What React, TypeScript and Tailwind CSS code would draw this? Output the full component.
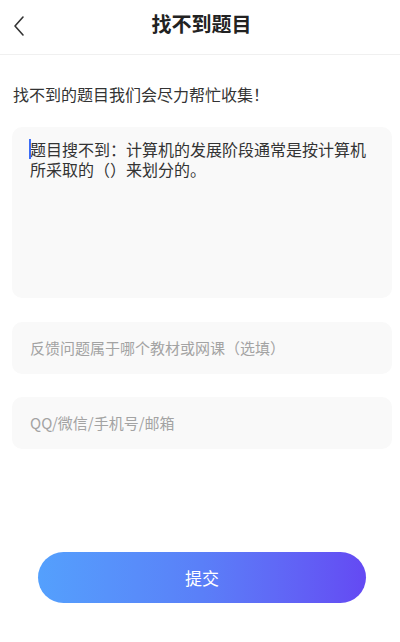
import React from "react";

export default function App() {
  const font = { fontFamily: '"Noto Sans CJK SC", "Noto Sans", sans-serif' };
  return (
    <div className="w-[400px] h-[642px] bg-white flex flex-col text-[#333]" style={font}>
      <div className="h-[55px] relative flex items-center justify-center border-b border-[#f0f0f0]">
        <svg className="absolute left-[11px] top-[15px]" width="16" height="22" viewBox="0 0 16 22" fill="none">
          <path d="M12 2 L4 11 L12 20" stroke="#333" strokeWidth="1.6" strokeLinecap="round" strokeLinejoin="round" />
        </svg>
        <span className="text-[20px] font-bold text-[#222] leading-none mt-[-6px] ml-[3px]">找不到题目</span>
      </div>
      <div className="pl-[12px] pr-[8px] pt-[28px]">
        <div className="text-[16px] leading-[22px] text-[#333] pl-[1px]">找不到的题目我们会尽力帮忙收集！</div>
        <div className="mt-[22px] h-[171px] rounded-[10px] bg-[#f9f9f9] px-[18px] pt-[12px]">
          <div className="text-[16px] leading-[20px] text-[#333] relative">
            <span className="absolute left-[-1px] top-[0px] w-[2px] h-[20px] bg-[#3b6cf6]" />
            题目搜不到：计算机的发展阶段通常是按计算机所采取的（）来划分的。
          </div>
        </div>
        <div className="mt-[24px] h-[52px] rounded-[10px] bg-[#f9f9f9] px-[18px] flex items-center">
          <span className="text-[15px] text-[#a3a3a3]">反馈问题属于哪个教材或网课（选填）</span>
        </div>
        <div className="mt-[23px] h-[52px] rounded-[10px] bg-[#f9f9f9] px-[18px] flex items-center">
          <span className="text-[15px] text-[#a3a3a3]">QQ/微信/手机号/邮箱</span>
        </div>
      </div>
      <div className="flex pl-[38px] mt-[103px]">
        <div className="w-[328px] h-[51px] rounded-full bg-gradient-to-r from-[#54a0fd] via-[#5a7ff8] to-[#6449f3] flex items-center justify-center">
          <span className="text-white text-[17px]">提交</span>
        </div>
      </div>
    </div>
  );
}
